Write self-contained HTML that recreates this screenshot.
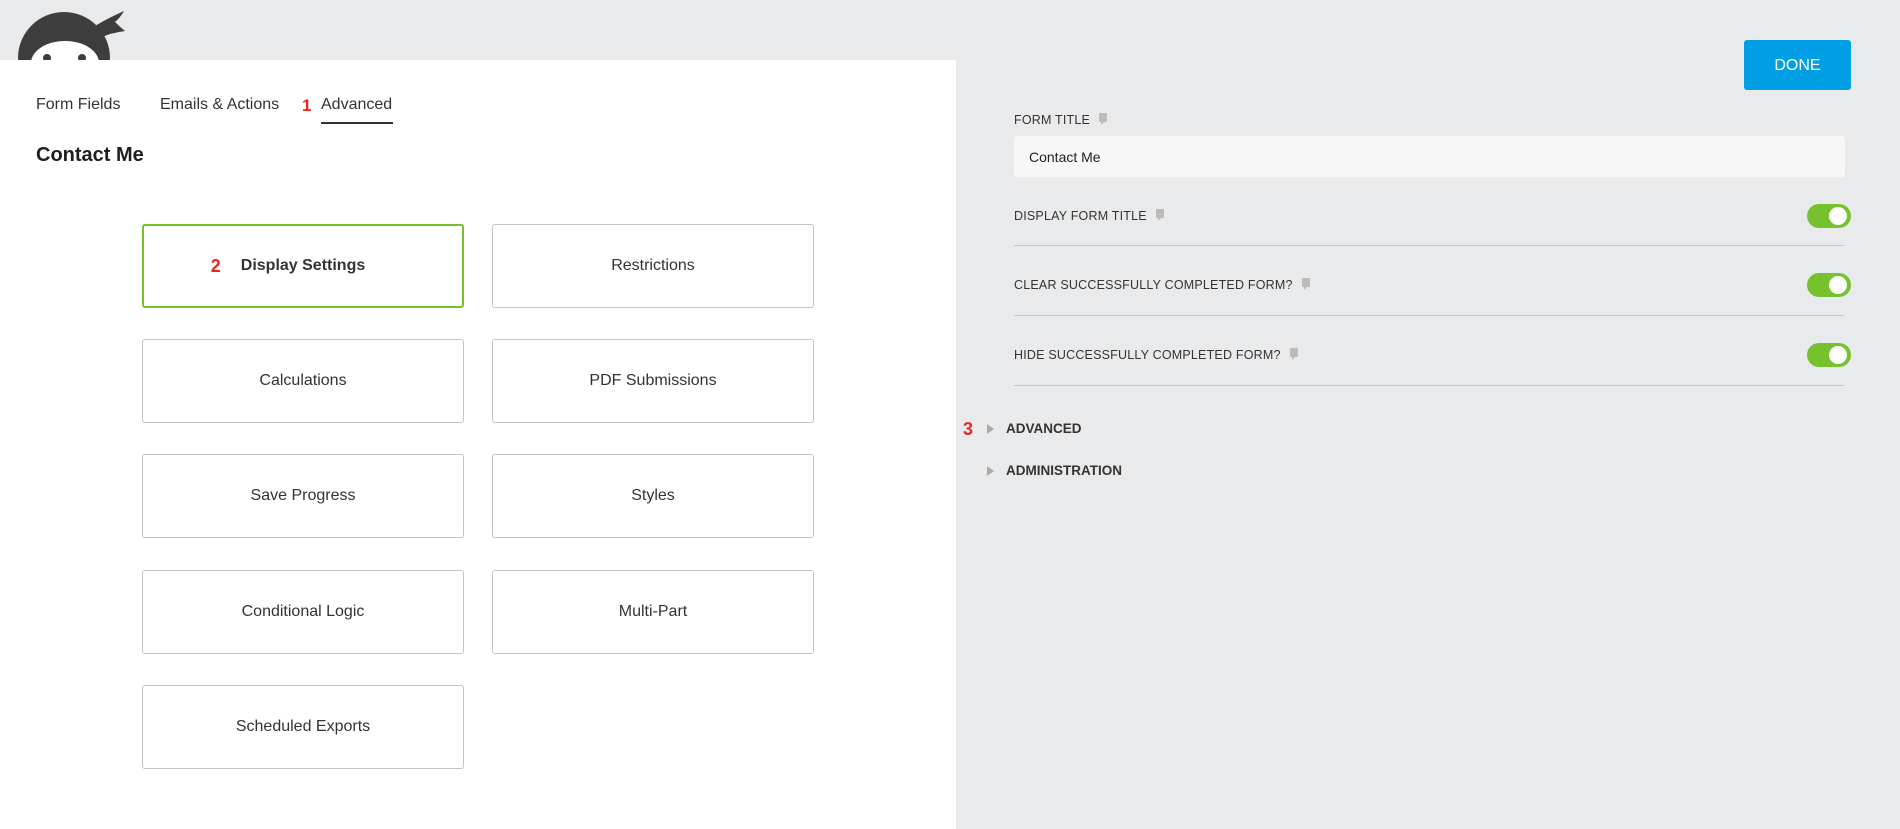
<!DOCTYPE html>
<html><head><meta charset="utf-8"><style>
*{box-sizing:border-box;margin:0;padding:0}
body{width:1900px;height:829px;background:#e9eaec;font-family:"Liberation Sans",sans-serif;position:relative;overflow:hidden;color:#1e1e1e}
.abs{position:absolute}
#left{left:0;top:60px;width:956px;height:769px;background:#fff}
.tab{top:96px;font-size:16px;color:#333}
.box{position:absolute;width:322px;height:84px;border:1px solid #c4c4c4;border-radius:3px;display:flex;align-items:center;justify-content:center;font-size:16px;color:#333;background:#fff}
.red{color:#e8271f;font-weight:bold}
.lbl{font-size:12.5px;color:#333;left:1014px;letter-spacing:.2px}
.bub{display:inline-block;width:8px;height:9px;background:#bbb;border-radius:1px;margin-left:9px;vertical-align:2px;position:relative}
.bub:after{content:"";position:absolute;left:2px;bottom:-3px;border-left:3px solid #bbb;border-bottom:3px solid transparent}
.tog{left:1807px;width:44px;height:24px;border-radius:12px;background:#76c22e}
.tog:after{content:"";position:absolute;right:4px;top:3px;width:18px;height:18px;border-radius:50%;background:#fff}
.line{left:1014px;width:830px;height:1px;background:#c8c8c8}
.sec{font-size:13.5px;font-weight:bold;color:#333;left:1006px}
.tri{left:987px;width:0;height:0;border-left:7px solid #aaa;border-top:5px solid transparent;border-bottom:5px solid transparent}
</style></head><body>
<svg class="abs" style="left:0;top:0" width="140" height="60" viewBox="0 0 140 60">
<path d="M92 28 Q104 20 124 11 Q120 18 115 22 Q120 27 125 31 Q110 33 100 38 Z" fill="#3d3d3d"/>
<circle cx="64" cy="58" r="46" fill="#3d3d3d"/>
<ellipse cx="65" cy="63" rx="34" ry="22" fill="#fff"/>
<ellipse cx="47" cy="58" rx="4" ry="4" fill="#3d3d3d"/>
<ellipse cx="82" cy="58" rx="4" ry="4" fill="#3d3d3d"/>
</svg>
<div class="abs" id="left"></div>
<div class="abs tab" style="left:36px">Form Fields</div>
<div class="abs tab" style="left:160px">Emails &amp; Actions</div>
<div class="abs tab red" style="left:302px;font-size:17px;top:96px">1</div>
<div class="abs tab" style="left:321px">Advanced</div>
<div class="abs" style="left:321px;top:122px;width:72px;height:2px;background:#333"></div>
<div class="abs" style="left:36px;top:144px;font-size:20px;font-weight:bold;color:#1e1e1e">Contact Me</div>

<div class="box" style="left:142px;top:224px;border:2px solid #76c22e;font-weight:bold"><span class="red" style="font-size:18px;margin-right:20px;margin-left:-30px">2</span>Display Settings</div>
<div class="box" style="left:492px;top:224px">Restrictions</div>
<div class="box" style="left:142px;top:339px">Calculations</div>
<div class="box" style="left:492px;top:339px">PDF Submissions</div>
<div class="box" style="left:142px;top:454px">Save Progress</div>
<div class="box" style="left:492px;top:454px">Styles</div>
<div class="box" style="left:142px;top:570px">Conditional Logic</div>
<div class="box" style="left:492px;top:570px">Multi-Part</div>
<div class="box" style="left:142px;top:685px">Scheduled Exports</div>

<div class="abs" style="left:1744px;top:40px;width:107px;height:50px;background:#019fe3;border-radius:3px;color:#fff;font-size:16px;display:flex;align-items:center;justify-content:center;padding-top:2px">DONE</div>

<div class="abs lbl" style="top:113px">FORM TITLE<span class="bub"></span></div>
<div class="abs" style="left:1014px;top:136px;width:831px;height:41px;background:#f7f7f7;border-radius:3px;font-size:14px;color:#222;padding:13px 0 0 15px">Contact Me</div>

<div class="abs lbl" style="top:209px">DISPLAY FORM TITLE<span class="bub"></span></div>
<div class="abs tog" style="top:204px"></div>
<div class="abs line" style="top:245px"></div>

<div class="abs lbl" style="top:278px">CLEAR SUCCESSFULLY COMPLETED FORM?<span class="bub"></span></div>
<div class="abs tog" style="top:273px"></div>
<div class="abs line" style="top:315px"></div>

<div class="abs lbl" style="top:348px">HIDE SUCCESSFULLY COMPLETED FORM?<span class="bub"></span></div>
<div class="abs tog" style="top:343px"></div>
<div class="abs line" style="top:385px"></div>

<div class="abs red" style="left:963px;top:419px;font-size:18px">3</div>
<div class="abs tri" style="top:424px"></div>
<div class="abs sec" style="top:421px">ADVANCED</div>
<div class="abs tri" style="top:466px"></div>
<div class="abs sec" style="top:463px">ADMINISTRATION</div>
</body></html>
